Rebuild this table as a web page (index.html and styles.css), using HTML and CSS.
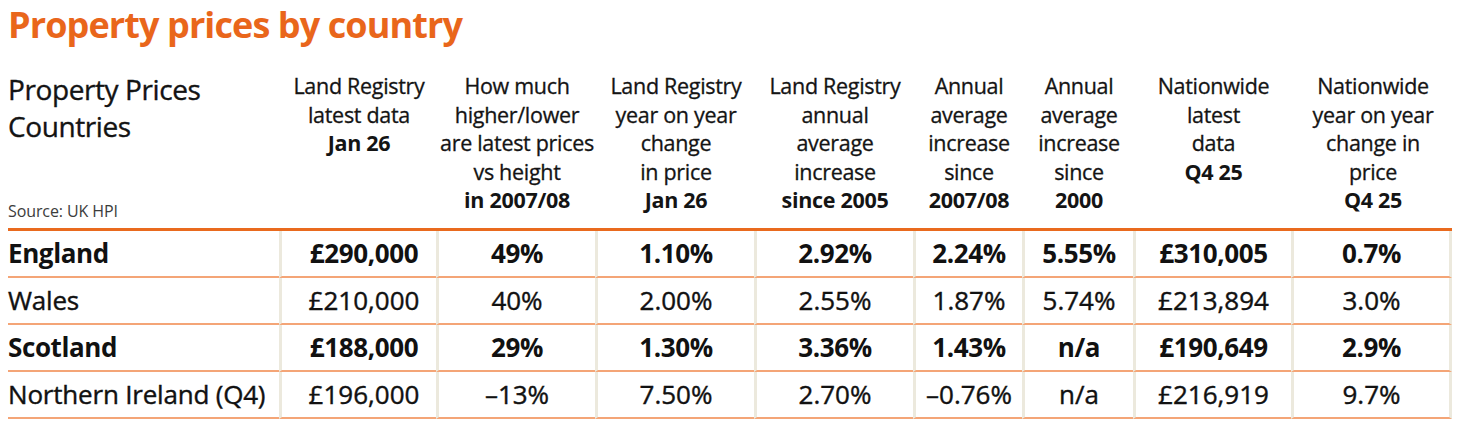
FILE: index.html
```html
<!DOCTYPE html>
<html lang="en">
<head>
<meta charset="utf-8">
<title>Property prices by country</title>
<link rel="stylesheet" href="styles.css">
</head>
<body>
<h1 class="title">Property prices by country</h1>
<div class="table" role="table">
  <div class="row head" role="row">
    <div class="hcell first" role="columnheader">
      <div class="caption">Property Prices<br>Countries</div>
      <div class="source">Source: UK HPI</div>
    </div>
    <div class="hcell" role="columnheader">Land Registry<br>latest data<br><b>Jan 26</b></div>
    <div class="hcell" role="columnheader">How much<br>higher/lower<br>are latest prices<br>vs height<br><b>in 2007/08</b></div>
    <div class="hcell" role="columnheader">Land Registry<br>year on year<br>change<br>in price<br><b>Jan 26</b></div>
    <div class="hcell" role="columnheader">Land Registry<br>annual<br>average<br>increase<br><b>since 2005</b></div>
    <div class="hcell" role="columnheader">Annual<br>average<br>increase<br>since<br><b>2007/08</b></div>
    <div class="hcell" role="columnheader">Annual<br>average<br>increase<br>since<br><b>2000</b></div>
    <div class="hcell" role="columnheader">Nationwide<br>latest<br>data<br><b>Q4 25</b></div>
    <div class="hcell" role="columnheader">Nationwide<br>year on year<br>change in<br>price<br><b>Q4 25</b></div>
  </div>
  <div class="row body bold" role="row">
    <div class="cell name">England</div>
    <div class="cell c2">£290,000</div>
    <div class="cell">49%</div>
    <div class="cell">1.10%</div>
    <div class="cell">2.92%</div>
    <div class="cell">2.24%</div>
    <div class="cell">5.55%</div>
    <div class="cell">£310,005</div>
    <div class="cell last">0.7%</div>
  </div>
  <div class="row body" role="row">
    <div class="cell name">Wales</div>
    <div class="cell c2">£210,000</div>
    <div class="cell">40%</div>
    <div class="cell">2.00%</div>
    <div class="cell">2.55%</div>
    <div class="cell">1.87%</div>
    <div class="cell">5.74%</div>
    <div class="cell">£213,894</div>
    <div class="cell last">3.0%</div>
  </div>
  <div class="row body bold" role="row">
    <div class="cell name">Scotland</div>
    <div class="cell c2">£188,000</div>
    <div class="cell">29%</div>
    <div class="cell">1.30%</div>
    <div class="cell">3.36%</div>
    <div class="cell">1.43%</div>
    <div class="cell">n/a</div>
    <div class="cell">£190,649</div>
    <div class="cell last">2.9%</div>
  </div>
  <div class="row body" role="row">
    <div class="cell name">Northern Ireland (Q4)</div>
    <div class="cell c2">£196,000</div>
    <div class="cell">–13%</div>
    <div class="cell">7.50%</div>
    <div class="cell">2.70%</div>
    <div class="cell">–0.76%</div>
    <div class="cell">n/a</div>
    <div class="cell">£216,919</div>
    <div class="cell last">9.7%</div>
  </div>
</div>
</body>
</html>
```
FILE: styles.css
```css
html, body {
  margin: 0;
  padding: 0;
  background: #ffffff;
}
body {
  font-family: "Open Sans", "Noto Sans", "Liberation Sans", sans-serif;
  font-weight: 400;
  color: #111111;
  width: 1460px;
}
.title {
  margin: 0;
  padding: 0 0 0 8px;
  font-size: 36px;
  line-height: 50px;
  font-weight: 700;
  letter-spacing: -0.9px;
  color: #e9661b;
}
.table {
  margin: 22px 0 0 8px;
  width: 1444px;
}
.row {
  display: grid;
  grid-template-columns: 271px 157px 159px 159px 159px 109px 111px 158px 161px;
}
.head {
  height: 156px;
  border-bottom: 3px solid #e96a1e;
}
.hcell {
  font-size: 21.5px;
  line-height: 28.5px;
  text-align: center;
  white-space: nowrap;
  padding-left: 3px;
  letter-spacing: -0.3px;
  color: #141414;
  -webkit-text-stroke: 0.3px #141414;
}
.hcell b {
  font-weight: 700;
  -webkit-text-stroke: 0;
}
.hcell.first {
  display: flex;
  flex-direction: column;
  justify-content: space-between;
  text-align: left;
  padding: 0 0 8px 0;
  margin-top: -1px;
}
.caption {
  font-size: 28px;
  line-height: 37px;
  letter-spacing: -0.4px;
  -webkit-text-stroke: 0.35px #111111;
}
.source {
  font-size: 16px;
  line-height: 18px;
  color: #3c3c3c;
  letter-spacing: -0.1px;
  -webkit-text-stroke: 0;
}
.body {
  height: 47px;
}
.cell {
  box-sizing: border-box;
  display: flex;
  align-items: center;
  justify-content: center;
  height: 47px;
  font-size: 26px;
  white-space: nowrap;
  border-left: 3px solid #ece9dd;
  border-bottom: 2px solid #f4a577;
  padding-bottom: 1px;
  -webkit-text-stroke: 0.4px #111111;
}
.cell.name {
  justify-content: flex-start;
  border-left: 0;
  letter-spacing: -0.2px;
}
.cell.c2 {
  padding-left: 10px;
}
.cell.last {
  border-right: 3px solid #ece9dd;
}
.bold .cell {
  font-weight: 700;
  letter-spacing: -0.4px;
  -webkit-text-stroke: 0;
}
```
